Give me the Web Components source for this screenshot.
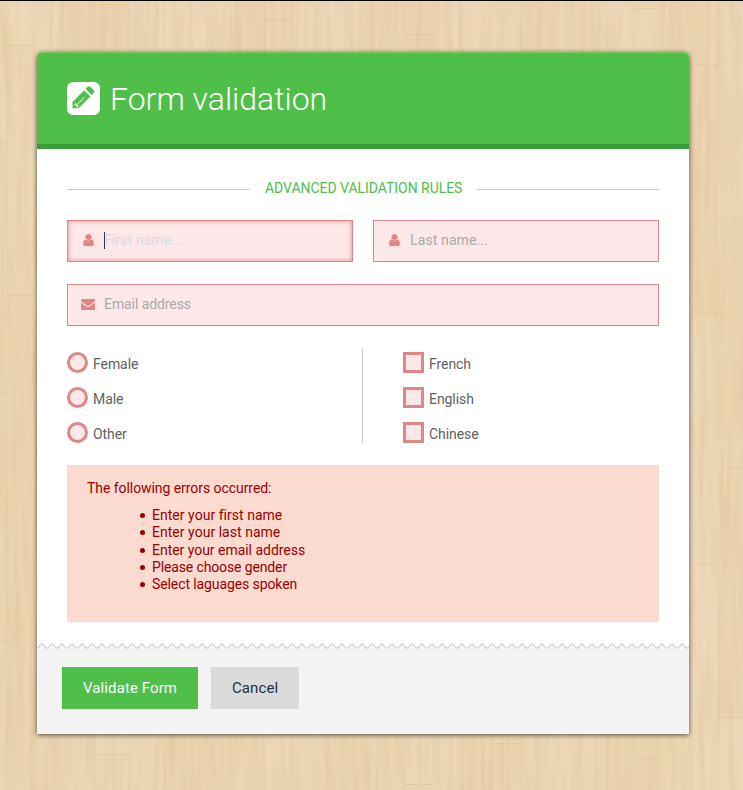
<!DOCTYPE html>
<html lang="en">
<head>
<meta charset="utf-8">
<title>Form validation</title>
<style>
html,body{margin:0;padding:0}
body{width:743px;height:790px;overflow:hidden;font:14px/17px Roboto,"Liberation Sans",sans-serif;color:#626262}
</style>
</head>
<body>
<wood-page>
  <form-card>
    <card-header slot="header">Form validation</card-header>
    <section-title>ADVANCED VALIDATION RULES</section-title>
    <form-row>
      <icon-field icon="user" focused style="--track:.08px">First name...</icon-field>
      <icon-field icon="user" style="--track:.12px">Last name...</icon-field>
    </form-row>
    <form-row>
      <icon-field icon="mail" style="--track:-.08px">Email address</icon-field>
    </form-row>
    <choice-columns>
      <choice-item slot="left" kind="radio">Female</choice-item>
      <choice-item slot="left" kind="radio">Male</choice-item>
      <choice-item slot="left" kind="radio">Other</choice-item>
      <choice-item slot="right">French</choice-item>
      <choice-item slot="right">English</choice-item>
      <choice-item slot="right">Chinese</choice-item>
    </choice-columns>
    <error-box heading="The following errors occurred:">
      <error-line style="letter-spacing:.03px">Enter your first name</error-line>
      <error-line style="letter-spacing:.03px">Enter your last name</error-line>
      <error-line style="letter-spacing:-.03px">Enter your email address</error-line>
      <error-line style="letter-spacing:-.13px">Please choose gender</error-line>
      <error-line style="letter-spacing:-.1px">Select laguages spoken</error-line>
    </error-box>
    <form-button slot="footer" primary>Validate Form</form-button>
    <form-button slot="footer">Cancel</form-button>
  </form-card>
</wood-page>
<script>
const define = (name, html) => customElements.define(name, class extends HTMLElement {
  constructor() {
    super();
    const root = this.attachShadow({ mode: 'open' });
    root.innerHTML = typeof html === 'function' ? html(this) : html;
  }
});

const planks = () => {
  const xs = [-30, 7, 35, 61, 95, 129, 164, 206, 236, 264, 292, 321, 345, 371, 405, 434, 462, 491, 520, 541, 571, 607, 634, 661, 691, 718, 760];
  const tones = ['#ead4b3', '#e8d1ae', '#ebd6b7', '#e9d2b0', '#ead5b5'];
  let out = '';
  xs.slice(0, -1).forEach((x, i) => {
    const w = xs[i + 1] - x;
    let y = -((i * 97 + 109) % 250), n = 0;
    while (y < 790) {
      out += `<rect x="${x}" y="${y}" width="${w}" height="250" fill="${tones[(i * 2 + n * 3) % 5]}"/>` +
        `<path d="M${x} ${y + .5}h${w}" stroke="#d9b988" stroke-opacity=".4"/>` +
        `<path d="M${x + .5} ${y}v250" stroke="#d9bd8f" stroke-opacity=".2"/>`;
      y += 250; n++;
    }
  });
  return out;
};

define('wood-page', () => `<style>
:host{display:grid;position:relative;box-sizing:border-box;width:743px;height:790px;border-top:1px solid #000;background:#e9d3b0;padding:51px 0 0 37px;align-items:start;justify-items:start;overflow:hidden}
svg{position:absolute;inset:0}
slot{display:block}
.top{position:relative}
</style>
<svg width="743" height="790" aria-hidden="true">
<filter id="g" x="0" y="0" width="100%" height="100%" color-interpolation-filters="sRGB"><feTurbulence type="fractalNoise" baseFrequency=".17 .009" numOctaves="3" seed="8"/><feColorMatrix values="0 0 0 0 .86  0 0 0 0 .72  0 0 0 0 .50  1.6 0 0 0 -.55"/></filter>
<filter id="h" x="0" y="0" width="100%" height="100%" color-interpolation-filters="sRGB"><feTurbulence type="fractalNoise" baseFrequency=".2 .012" numOctaves="2" seed="3"/><feColorMatrix values="0 0 0 0 .96  0 0 0 0 .89  0 0 0 0 .77  1.6 0 0 0 -.55"/></filter>
${planks()}<rect width="743" height="790" filter="url(#g)" opacity=".32"/><rect width="743" height="790" filter="url(#h)" opacity=".42"/></svg>
<div class="top"><slot></slot></div>`);

let teeth = 'M0 6';
for (let x = 0; x < 660; x += 10) teeth += `L${x + 5} 1.5L${x + 10} 6.5`;

define('form-card', `<style>
:host{display:flex;flex-direction:column;width:652px;height:682px;background:#fff;border-radius:5px 5px 0 0;box-shadow:0 1px 5px rgba(0,0,0,.65)}
.body{display:flex;flex-direction:column;padding:31px 30px 0;height:493px;box-sizing:border-box}
svg{display:block;width:652px;height:8px;flex:none}
.foot{display:flex;gap:13px;align-items:flex-start;padding:17px 25px;background:#f4f4f4;flex:1}
</style>
<slot name="header"></slot><div class="body"><slot></slot></div>
<svg viewBox="0 0 652 8"><path d="${teeth}V8H0z" fill="#f4f4f4"/><path d="${teeth}" fill="none" stroke="#b9b9b9"/></svg>
<div class="foot"><slot name="footer"></slot></div>`);

define('card-header', `<style>
:host{display:flex;align-items:center;gap:10px;height:97px;box-sizing:border-box;padding:0 30px 1px;background:#4fbf4a;border-bottom:5px solid #3c9b39;border-top:1px solid #7fc95c;border-radius:5px 5px 0 0;color:#fff;font-size:32px;font-weight:300;line-height:38px;flex:none}
svg{width:33px;height:33px;fill:#fff;flex:none}
span{padding-top:2px}
</style>
<svg viewBox="128 128 1536 1536"><path d="M532 1108l152 152-52 52h-56v-96h-96v-56zm414-274q14 13-3 30l-291 291q-17 17-30 3-14-13 3-30l291-291q17-17 30-3zm-274 510l544-544-288-288-544 544v288h288zm608-608l92-92q28-28 28-68t-28-68l-152-152q-28-28-68-28t-68 28l-92 92zm384-320v960q0 119-84.5 203.5t-203.5 84.5h-960q-119 0-203.5-84.5t-84.5-203.5v-960q0-119 84.5-203.5t203.5-84.5h960q119 0 203.5 84.5t84.5 203.5z"/></svg>
<span><slot></slot></span>`);

define('section-title', `<style>
:host{display:flex;align-items:center;gap:15px;height:17px;margin-bottom:23px;color:#4fbf4a;line-height:17px;white-space:nowrap}
:host::before,:host::after{content:"";height:1px;flex:none;width:183px;background:#ccc;margin-top:2px}
:host::after{width:182px}
span{width:197px;letter-spacing:-.04px}
</style><span><slot></slot></span>`);

define('form-row', `<style>
:host{display:flex;gap:20px;margin-bottom:22px}
::slotted(*){flex:1}
</style><slot></slot>`);

const glyphs = {
  user: 'M1536 1399q0 109-62.5 187t-150.5 78h-854q-88 0-150.5-78t-62.5-187q0-85 8.5-160.5t31.5-152 58.5-131 94-89 134.5-34.5q131 128 313 128t313-128q76 0 134.5 34.5t94 89 58.5 131 31.5 152 8.5 160.5zm-256-887q0 159-112.5 271.5t-271.5 112.5-271.5-112.5-112.5-271.5 112.5-271.5 271.5-112.5 271.5 112.5 112.5 271.5z',
  mail: 'M1792 710v794q0 66-47 113t-113 47h-1472q-66 0-113-47t-47-113v-794q44 49 101 87 362 246 497 345 57 42 92.5 65.5t94.5 48 110 24.5h2q51 0 110-24.5t94.5-48 92.5-65.5q170-123 498-345 57-39 100-87zm0-294q0 79-49 151t-122 123q-376 261-468 325-10 7-42.5 31t-54 38.5-52 32.5-57.5 27-50 9h-2q-23 0-50-9t-57.5-27-52-32.5-54-38.5-42.5-31q-91-64-262-182.5t-205-142.5q-62-42-117-115.5t-55-136.5q0-78 41.5-130t118.5-52h1472q65 0 112.5 47t47.5 113z'
};
define('icon-field', el => `<style>
:host{display:flex;align-items:center;box-sizing:border-box;height:42px;border:1px solid #df8786;background:#fde8e9;padding:0 13px 1px;color:#aaa}
:host([focused]){color:#d9dbdf;box-shadow:inset 0 0 5px #df8786}
svg{width:14px;height:14px;fill:#df8786;margin:0 9px 1px 0}
:host([icon=user]) svg{width:15px;height:14px;margin:0 8px 1px 0}
i{width:1px;height:17px;background:#333;margin-right:-1px}
:host(:not([focused])) i{background:none}
span{letter-spacing:var(--track);line-height:17px}
</style><svg viewBox="0 0 1792 1792" preserveAspectRatio="none"><path d="${glyphs[el.getAttribute('icon')]}"/></svg><i></i><span><slot></slot></span>`);

define('choice-columns', `<style>
:host{display:flex;height:95px;margin-bottom:22px}
div{display:flex;flex-direction:column;gap:14px;padding-top:4px;box-sizing:border-box}
.l{width:296px;border-right:1px solid #ccc}
.r{padding-left:40px}
</style><div class="l"><slot name="left"></slot></div><div class="r"><slot name="right"></slot></div>`);

define('choice-item', `<style>
:host{display:flex;gap:5px;height:21px}
b{box-sizing:border-box;width:21px;height:21px;border:3px solid #df8786;background:#fde8e9}
:host([kind=radio]) b{border-radius:50%}
span{padding-top:4px;line-height:17px;letter-spacing:-.06px}
</style><b></b><span><slot></slot></span>`);

define('error-box', el => `<style>
:host{display:block;height:157px;box-sizing:border-box;padding:15px 20px;background:#fbdad0;color:#9a0000}
p{margin:0 0 10px;line-height:17px;letter-spacing:-.06px}
div{display:flex;flex-direction:column;padding-left:53px}
</style><p>${el.getAttribute('heading')}</p><div><slot></slot></div>`);

define('error-line', `<style>
:host{display:flex;align-items:center;gap:7px;line-height:17.25px;height:17.25px}
i{width:5px;height:5px;border-radius:50%;background:#9a0000}
</style><i></i><span><slot></slot></span>`);

define('form-button', `<style>
:host{display:block;box-sizing:border-box;width:88px;height:42px;line-height:42px;padding-left:21px;background:#dbdbdb;color:#243140;font-size:15px;letter-spacing:.1px;white-space:nowrap}
:host([primary]){width:136px;background:#4fbf4a;color:#fff}
</style><slot></slot>`);
</script>
</body>
</html>
